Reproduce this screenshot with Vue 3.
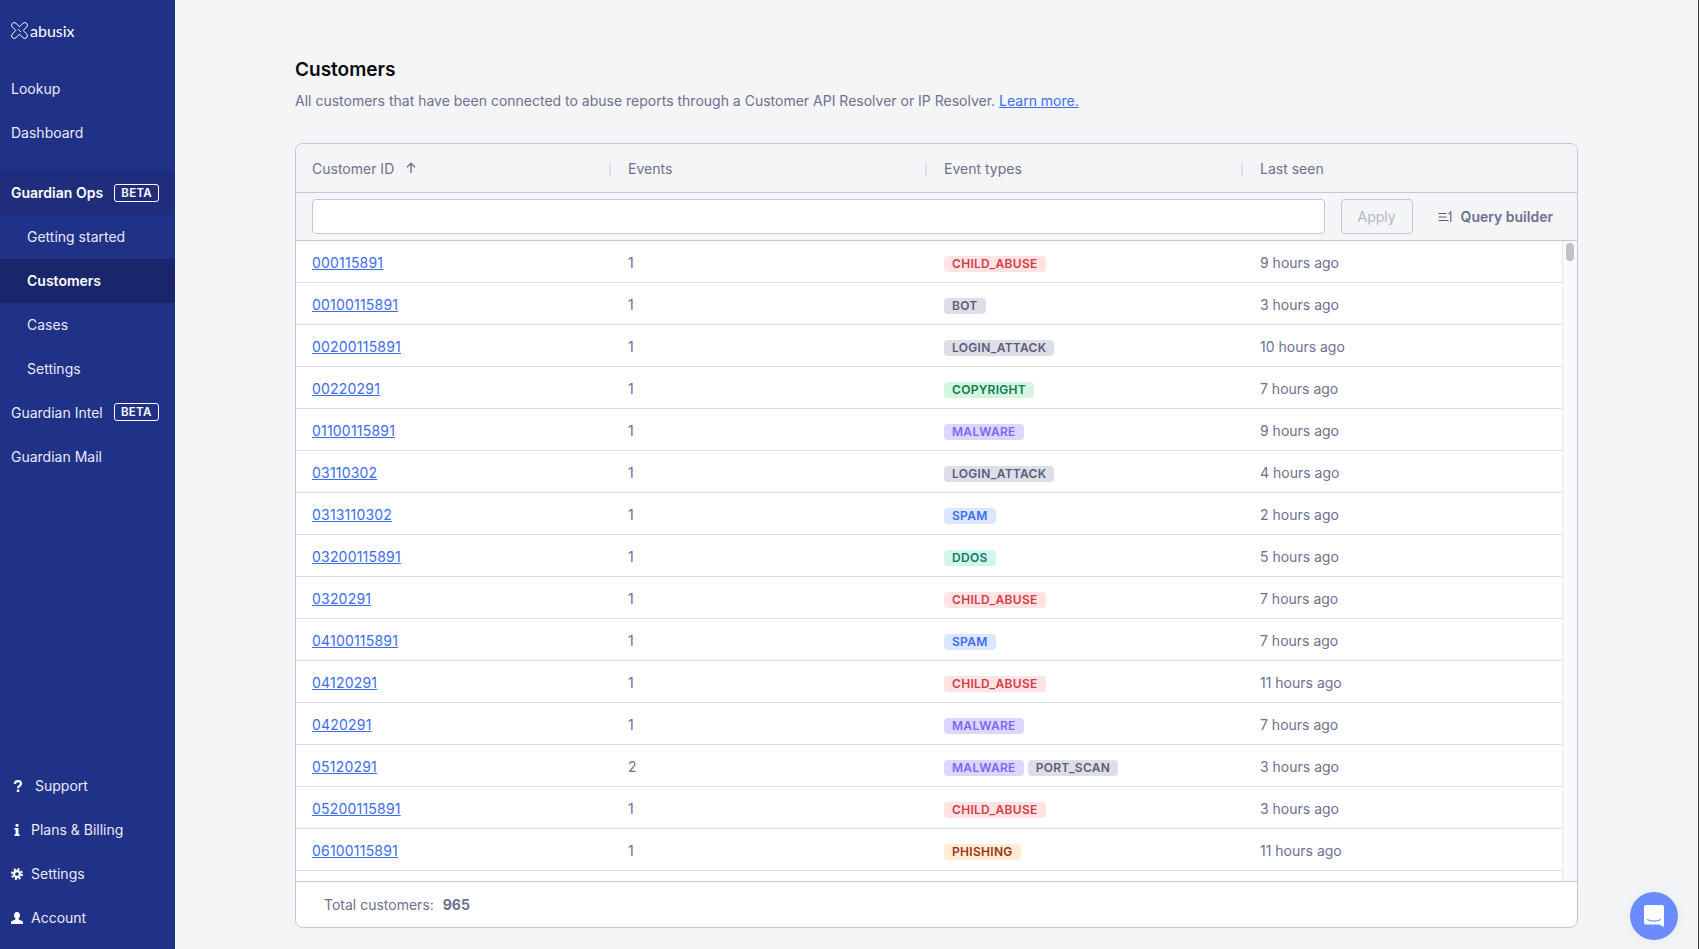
<template>
  <div class="layout">
    <aside class="sidebar">
      <div class="logo">
        <svg width="17" height="17" viewBox="0 0 17 17" fill="none" stroke="#fff" stroke-width="1">
          <path d="M5.040 1.360 8.500 4.820 11.960 1.360A2.600 2.600 0 0 1 15.640 5.040L12.180 8.500 15.640 11.960A2.600 2.600 0 0 1 11.960 15.640L8.500 12.180 5.040 15.640A2.600 2.600 0 0 1 1.360 11.960L4.820 8.500 1.360 5.040A2.600 2.600 0 0 1 5.040 1.360Z" />
          <path d="M6.900 6.900 10.100 10.100" stroke-width=".8" />
        </svg>
        <span class="logo-text">abusix</span>
      </div>

      <nav class="nav-top">
        <a class="nav-item">Lookup</a>
        <a class="nav-item">Dashboard</a>
      </nav>

      <nav class="nav-group">
        <a class="nav-item section">Guardian Ops <span class="beta">BETA</span></a>
        <a class="nav-item sub">Getting started</a>
        <a class="nav-item sub active">Customers</a>
        <a class="nav-item sub">Cases</a>
        <a class="nav-item sub">Settings</a>
        <a class="nav-item">Guardian Intel <span class="beta">BETA</span></a>
        <a class="nav-item">Guardian Mail</a>
      </nav>

      <nav class="nav-bottom">
        <a class="nav-item">
          <svg class="q-icon" width="12" height="12" viewBox="0 0 12 12" fill="none" stroke="#fff" stroke-width="2.200">
            <path d="M2.900 4C2.900 2.200 4.300 1.200 6 1.200c1.800 0 3 1 3 2.500 0 2.200-3 2.200-3 4.500" />
            <rect x="4.800" y="9.600" width="2.400" height="2.400" fill="#fff" stroke="none" />
          </svg>
          <span>Support</span>
        </a>
        <a class="nav-item">
          <svg class="sm-icon" width="12" height="12" viewBox="0 0 12 12" fill="#fff">
            <rect x="4.600" y="0" width="2.800" height="2.700" rx=".5" />
            <path d="M3.500 4h4v6.300h1.100V12H3.500v-1.700h1.100V5.700H3.500z" />
          </svg>
          <span>Plans &amp; Billing</span>
        </a>
        <a class="nav-item">
          <svg class="sm-icon" width="12" height="12" viewBox="0 0 12 12" fill="none" stroke="#fff">
            <circle cx="6" cy="6" r="3" stroke-width="2.300" />
            <circle cx="6" cy="6" r="5" stroke-width="2" stroke-dasharray="1.960 1.967" />
          </svg>
          <span>Settings</span>
        </a>
        <a class="nav-item">
          <svg class="sm-icon" width="12" height="12" viewBox="0 0 12 12" fill="#fff">
            <path d="M6 0c1.800 0 3 1.400 3 3.300 0 1.400-.6 2.500-1.400 3.200v1l3.500 1.500c.6.300.9.700.9 1.300V12H0v-1.700c0-.6.300-1 .9-1.300l3.500-1.500v-1C3.600 5.800 3 4.700 3 3.300 3 1.400 4.200 0 6 0z" />
          </svg>
          <span>Account</span>
        </a>
      </nav>
    </aside>

    <main class="content">
      <h1>Customers</h1>
      <p class="intro">
        All customers that have been connected to abuse reports through a Customer API Resolver or IP Resolver.
        <a class="link">Learn more.</a>
      </p>

      <section class="card">
        <div class="head">
          <div class="col">
            Customer ID
            <svg class="arrow" width="12" height="12" viewBox="0 0 12 12" fill="none" stroke="#6f6f8f" stroke-width="1.400"><path d="M6 11V1.500M2 5.200 6 1.300l4 3.900" /></svg>
          </div>
          <div class="col">Events</div>
          <div class="col">Event types</div>
          <div class="col">Last seen</div>
        </div>

        <div class="filter">
          <input class="query" type="text" />
          <button class="apply" disabled>Apply</button>
          <div class="builder">
            <svg width="15" height="12" viewBox="0 0 15 12" fill="none" stroke="#5c5c78" stroke-width="1.100"><path d="M.5 2.500h8M.5 6h8M.5 9.500h10M10.500 3.200 12.800.9V11" /></svg>
            <span>Query builder</span>
          </div>
        </div>

        <div class="body">
          <div class="rows">
            <div v-for="row in rows" :key="row.id" class="row">
              <div class="cell"><a class="link id">{{ row.id }}</a></div>
              <div class="cell">{{ row.events }}</div>
              <div class="cell tags">
                <span v-for="t in row.types" :key="t" class="tag" :class="tagClass(t)">{{ t }}</span>
              </div>
              <div class="cell">{{ row.seen }}</div>
            </div>
          </div>
          <div class="scrollbar"><div class="thumb"></div></div>
        </div>

        <div class="foot">Total customers: <b>965</b></div>
      </section>
    </main>

    <button class="chat">
      <svg width="22" height="24" viewBox="0 0 22 24"><path fill="#fff" d="M3 1h16a2 2 0 0 1 2 2v20l-5-2.500H3a2 2 0 0 1-2-2V3a2 2 0 0 1 2-2z"/><path d="M4 15.500c4 1.800 10 1.800 14 0" fill="none" stroke="#6b8cff" stroke-width="1.200"/></svg>
    </button>
  </div>
</template>

<script setup>
const rows = [
  { id: '000115891', events: 1, types: ['CHILD_ABUSE'], seen: '9 hours ago' },
  { id: '00100115891', events: 1, types: ['BOT'], seen: '3 hours ago' },
  { id: '00200115891', events: 1, types: ['LOGIN_ATTACK'], seen: '10 hours ago' },
  { id: '00220291', events: 1, types: ['COPYRIGHT'], seen: '7 hours ago' },
  { id: '01100115891', events: 1, types: ['MALWARE'], seen: '9 hours ago' },
  { id: '03110302', events: 1, types: ['LOGIN_ATTACK'], seen: '4 hours ago' },
  { id: '0313110302', events: 1, types: ['SPAM'], seen: '2 hours ago' },
  { id: '03200115891', events: 1, types: ['DDOS'], seen: '5 hours ago' },
  { id: '0320291', events: 1, types: ['CHILD_ABUSE'], seen: '7 hours ago' },
  { id: '04100115891', events: 1, types: ['SPAM'], seen: '7 hours ago' },
  { id: '04120291', events: 1, types: ['CHILD_ABUSE'], seen: '11 hours ago' },
  { id: '0420291', events: 1, types: ['MALWARE'], seen: '7 hours ago' },
  { id: '05120291', events: 2, types: ['MALWARE', 'PORT_SCAN'], seen: '3 hours ago' },
  { id: '05200115891', events: 1, types: ['CHILD_ABUSE'], seen: '3 hours ago' },
  { id: '06100115891', events: 1, types: ['PHISHING'], seen: '11 hours ago' }
]

const tagClass = (t) => {
  if (t === 'CHILD_ABUSE') return 'red'
  if (t === 'COPYRIGHT') return 'green'
  if (t === 'DDOS') return 'teal'
  if (t === 'MALWARE') return 'purple'
  if (t === 'SPAM') return 'blue'
  if (t === 'PHISHING') return 'orange'
  return 'gray'
}
</script>

<style>
body {
  margin: 0;
  overflow: hidden;
}
</style>

<style scoped>
.layout {
  display: flex;
  height: 949px;
  width: 1699px;
  box-sizing: border-box;
  border-right: 1px solid #3a3a3a;
  background: #f4f5f7;
  font-family: Inter, "Liberation Sans", sans-serif;
  font-size: 14px;
  color: #6f6f8f;
  overflow: hidden;
}

.sidebar {
  width: 175px;
  flex-shrink: 0;
  display: flex;
  flex-direction: column;
  background: #203188;
  color: #fff;
}

.logo {
  display: flex;
  align-items: center;
  gap: 2px;
  height: 60px;
  padding-left: 11px;
}

.logo-text {
  font-family: Lato, sans-serif;
  font-size: 16px;
  font-weight: 400;
}

.nav-top {
  margin-bottom: 16px;
  padding-top: 7px;
}

.nav-bottom {
  margin-top: auto;
  padding-bottom: 9px;
}

.nav-item {
  display: flex;
  align-items: center;
  height: 44px;
  box-sizing: border-box;
  padding: 0 0 2px 11px;
  color: #e8eaf6;
  white-space: nowrap;
}

.section {
  background: #1f2d7c;
  color: #fff;
  font-weight: 600;
  padding-bottom: 1px;
}

.sub {
  padding-left: 27px;
}

.sub.active {
  background: #1a266b;
  color: #fff;
  font-weight: 600;
  padding-bottom: 1px;
}

.beta {
  margin-left: 11px;
  padding: 0 6.200px;
  height: 16px;
  line-height: 16px;
  border: 1px solid #fff;
  border-radius: 3px;
  font-size: 11.500px;
  font-weight: 600;
  letter-spacing: .3px;
  color: #fff;
}

.nav-item svg {
  flex-shrink: 0;
}

.q-icon {
  margin: 2px 11px 0 1px;
}

.sm-icon {
  margin: 2px 8px 0 0;
}

.content {
  flex: 1;
  padding: 57px 121px 0 120px;
  min-width: 0;
}

h1 {
  margin: 0;
  font-size: 19px;
  line-height: 26px;
  font-weight: 600;
  color: #0a0a0f;
}

.intro {
  margin: 7px 0 0;
  line-height: 22px;
}

.link {
  color: #3c6df0;
  text-decoration: underline;
}

.id {
  letter-spacing: .2px;
}

.card {
  margin-top: 31px;
  width: 1283px;
  box-sizing: border-box;
  border: 1px solid #c3c5da;
  border-radius: 8px;
  overflow: hidden;
  background: #fff;
}

.head {
  display: grid;
  grid-template-columns: repeat(4, 316px);
  height: 48px;
  box-sizing: content-box;
  align-items: center;
  background: #f4f5f7;
  border-bottom: 1px solid #c3c5da;
}

.col {
  position: relative;
  padding: 2px 0 0 16px;
  line-height: 14px;
}

.col + .col::before {
  content: '';
  position: absolute;
  left: -3px;
  top: 2px;
  width: 2px;
  height: 14px;
  background: #dcdee8;
}

.arrow {
  margin-left: 7px;
}

.filter {
  display: flex;
  align-items: center;
  height: 47px;
  padding: 0 24px 0 16px;
  background: #f4f5f7;
  border-bottom: 1px solid #c3c5da;
}

.query {
  flex: 1;
  min-width: 0;
  height: 35px;
  box-sizing: border-box;
  border: 1px solid #c3c5da;
  border-radius: 4px;
  background: #fff;
  outline: none;
}

.apply {
  width: 72px;
  height: 35px;
  margin-left: 16px;
  border: 1px solid #c3c5da;
  border-radius: 4px;
  background: transparent;
  font: inherit;
  color: #b4b6c8;
}

.builder {
  display: flex;
  align-items: center;
  gap: 8px;
  margin-left: 25px;
  font-weight: 600;
}

.body {
  display: flex;
  height: 640px;
  overflow: hidden;
}

.rows {
  flex: 1;
  min-width: 0;
}

.row {
  display: grid;
  grid-template-columns: repeat(4, 316px);
  height: 42px;
  box-sizing: border-box;
  padding-top: 1px;
  align-items: center;
  border-bottom: 1px solid #dcdee8;
  background: #fff;
}

.cell {
  padding-left: 16px;
  min-width: 0;
}

.tags {
  display: flex;
  gap: 4px;
  padding-top: 3px;
}

.tag {
  height: 16px;
  line-height: 16px;
  padding: 0 8px;
  border-radius: 4px;
  font-size: 12px;
  font-weight: 600;
  letter-spacing: .3px;
  white-space: nowrap;
}

.red { background: #fde3e4; color: #d23c44; }
.gray { background: #dcdfe8; color: #5c5c78; }
.green { background: #d3f5e2; color: #107a4a; }
.teal { background: #d2f6ec; color: #0f7a66; }
.purple { background: #dcd6ff; color: #7c66f5; }
.blue { background: #dbe6ff; color: #3c6df0; }
.orange { background: #ffecd6; color: #9a3412; }

.scrollbar {
  width: 15px;
  flex-shrink: 0;
  box-sizing: border-box;
  padding: 2px 0 0 3px;
  background: #fafafa;
  border-left: 1px solid #e8e8ee;
}

.thumb {
  width: 8px;
  height: 18px;
  border-radius: 4px;
  background: #c1c1c1;
}

.foot {
  display: flex;
  align-items: center;
  height: 46px;
  padding-left: 28px;
  border-top: 1px solid #c3c5da;
  box-sizing: border-box;
  white-space: pre;
}

.foot b {
  margin-left: 5px;
  font-weight: 700;
}

.chat {
  position: fixed;
  right: 21px;
  bottom: 9px;
  width: 48px;
  height: 48px;
  padding: 0;
  border: none;
  border-radius: 50%;
  background: #6b8cff;
  display: flex;
  align-items: center;
  justify-content: center;
  box-shadow: 0 1px 12px rgba(0, 0, 0, .06);
}
</style>
